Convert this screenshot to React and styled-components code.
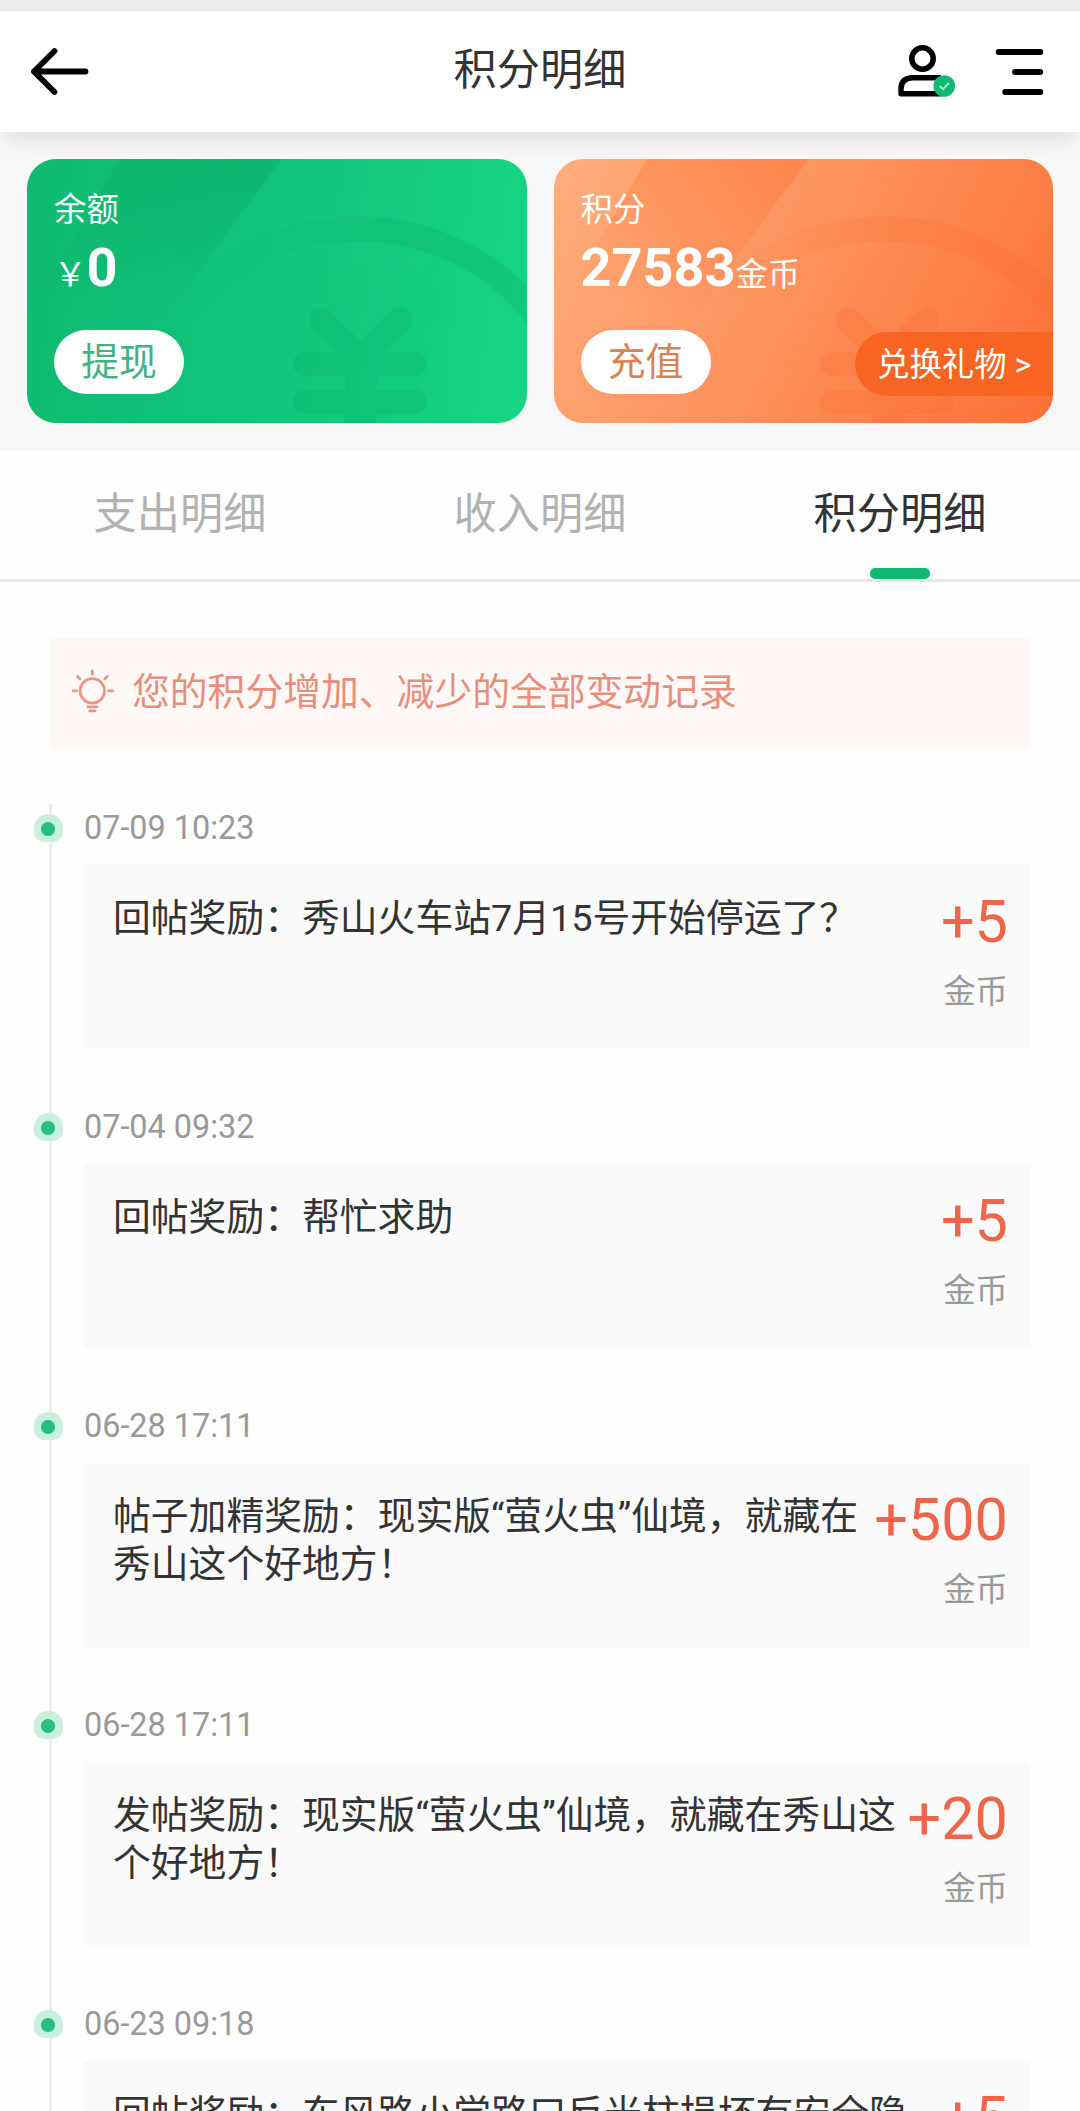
import React, { useState } from 'react';
import styled, { createGlobalStyle } from 'styled-components';


const tabs = ['支出明细', '收入明细', '积分明细'];

const records = [
  { time: '07-09 10:23', title: '回帖奖励：秀山火车站7月15号开始停运了？', amount: '+5' },
  { time: '07-04 09:32', title: '回帖奖励：帮忙求助', amount: '+5' },
  { time: '06-28 17:11', title: '帖子加精奖励：现实版“萤火虫”仙境，就藏在秀山这个好地方！', amount: '+500' },
  { time: '06-28 17:11', title: '发帖奖励：现实版“萤火虫”仙境，就藏在秀山这个好地方！', amount: '+20' },
  { time: '06-23 09:18', title: '回帖奖励：东风路小学路口反光柱损坏有安全隐患', amount: '+5' },
];

const BackIcon = () => (
  <svg width="62" height="52" viewBox="0 0 62 52" fill="none" stroke="#000" strokeWidth="5.8" strokeLinecap="round" strokeLinejoin="round">
    <path d="M27.5 5 L7 25.5 L27.5 46 M7 25.5 H58.5" />
  </svg>
);

const UserIcon = () => (
  <svg width="60" height="60" viewBox="0 0 60 60" fill="none">
    <circle cx="25.5" cy="16.5" r="10.7" stroke="#000" strokeWidth="5.6" />
    <path d="M44 35.7 H16 Q4 35.7 4 47 V51.8 H44" stroke="#000" strokeWidth="5.4" strokeLinejoin="round" />
    <circle cx="47.2" cy="44" r="10.8" fill="#11bb72" />
    <path d="M42.6 44 L46 47.2 L52 41" stroke="#b5f3d4" strokeWidth="1.8" />
  </svg>
);

const MenuIcon = () => (
  <svg width="52" height="52" viewBox="0 0 52 52" stroke="#000" strokeWidth="5.8" strokeLinecap="round">
    <path d="M4.6 6 H46.3 M21 26 H46.3 M11.2 46 H46.3" />
  </svg>
);

const BulbIcon = () => (
  <svg width="44" height="44" viewBox="0 0 44 44" fill="none" stroke="#ea9584" strokeWidth="2.8" strokeLinecap="round">
    <circle cx="21.3" cy="21.8" r="12.2" />
    <path d="M21.3 2 V5 M6.6 7.6 L9 10 M36.2 7.6 L33.8 10 M2 21.8 H5.6 M37.6 21.8 H42" />
    <path d="M16.8 37.8 H26 M18.8 41.8 H24" />
  </svg>
);

const CoinArt = ({ id, tint, opacity }) => (
  <Art viewBox="0 0 500 264" preserveAspectRatio="none">
    <defs>
      <linearGradient id={id} x1="0.75" y1="0" x2="0.4" y2="1">
        <stop offset="0" stopColor={tint} stopOpacity={opacity * 1.4} />
        <stop offset="0.6" stopColor={tint} stopOpacity="0" />
      </linearGradient>
      <linearGradient id={`${id}-ring`} x1="0" y1="0" x2="1" y2="0">
        <stop offset="0.1" stopColor={tint} stopOpacity="0" />
        <stop offset="0.7" stopColor={tint} stopOpacity={opacity} />
      </linearGradient>
    </defs>
    <path d="M93 0 H255 L60 264 H-60 Z" fill={`url(#${id})`} />
    <ellipse cx="331" cy="268" rx="216" ry="198" fill="none" stroke={`url(#${id}-ring)`} strokeWidth="25" />
    <g opacity={opacity * 0.9} fill={tint}>
      <path d="M294 161 L334 199 L373 161" fill="none" stroke={tint} strokeWidth="25" strokeLinecap="round" />
      <rect x="266" y="193" width="134" height="24" rx="12" />
      <rect x="318" y="217" width="32" height="47" />
      <rect x="266" y="231" width="134" height="24" rx="12" />
    </g>
  </Art>
);

const App = () => {
  const [active, setActive] = useState(2);

  return (
    <>
      <GlobalStyle />
      <Page>
        <StatusStrip />
        <Header>
          <HeaderSide>
            <BackIcon />
          </HeaderSide>
          <Title>积分明细</Title>
          <HeaderSide $end>
            <UserIcon />
            <MenuIcon />
          </HeaderSide>
        </Header>

        <Cards>
          <Card $bg="linear-gradient(98deg, #0fba70 0%, #11c379 45%, #16d583 100%)">
            <CoinArt id="balance" tint="#0a9a58" opacity={0.2} />
            <CardLabel>余额</CardLabel>
            <CardValue>
              <Unit>￥</Unit>0
            </CardValue>
            <CardFooter>
              <PillButton $color="#45b183">提现</PillButton>
            </CardFooter>
          </Card>
          <Card $bg="linear-gradient(118deg, #ffae7d 0%, #fd905b 50%, #fc6f35 100%)">
            <CoinArt id="points" tint="#fb6a2b" opacity={0.26} />
            <CardLabel>积分</CardLabel>
            <CardValue>
              27583<Unit>金币</Unit>
            </CardValue>
            <CardFooter>
              <PillButton $color="#dc8250">充值</PillButton>
              <GiftButton>兑换礼物 &gt;</GiftButton>
            </CardFooter>
          </Card>
        </Cards>

        <TabBar>
          {tabs.map((tab, i) => (
            <Tab key={tab} $active={i === active} onClick={() => setActive(i)}>
              {tab}
            </Tab>
          ))}
        </TabBar>

        <Notice>
          <BulbIcon />
          <NoticeText>您的积分增加、减少的全部变动记录</NoticeText>
        </Notice>

        <Timeline>
          {records.map((item, i) => (
            <Record key={i}>
              <RecordTime>{item.time}</RecordTime>
              <RecordBox>
                <RecordTitle>{item.title}</RecordTitle>
                <RecordAmount>
                  <Amount>{item.amount}</Amount>
                  <Coin>金币</Coin>
                </RecordAmount>
              </RecordBox>
            </Record>
          ))}
        </Timeline>
      </Page>
    </>
  );
};

export default App;


const GlobalStyle = createGlobalStyle`
  * {
    box-sizing: border-box;
  }

  body {
    margin: 0;
    background: #fefefe;
    font-family: Roboto, "Noto Sans CJK SC", sans-serif;
    color: #333;
    overflow: hidden;
  }

  svg {
    flex: none;
    display: block;
  }
`;

const Page = styled.div`
  width: 1080px;
  height: 2111px;
  overflow: hidden;
`;

const StatusStrip = styled.div`
  height: 11px;
  background: #ebebeb;
`;

const Header = styled.header`
  display: flex;
  align-items: center;
  justify-content: space-between;
  height: 121px;
  padding: 0 34px 0 27px;
  background: #fff;
  box-shadow: 0 14px 20px -6px rgba(0, 0, 0, 0.1);
  position: relative;
  z-index: 1;
`;

const HeaderSide = styled.div`
  display: flex;
  align-items: center;
  justify-content: ${({ $end }) => ($end ? 'flex-end' : 'flex-start')};
  gap: 37px;
  width: 240px;
`;

const Title = styled.h1`
  margin: 0 0 1px 7px;
  font-size: 43.2px;
  font-weight: 400;
  line-height: 60px;
`;

const Cards = styled.section`
  display: flex;
  gap: 27px;
  height: 318px;
  padding: 27px 27px 0;
  background: #f7f7f7;
`;

const Card = styled.div`
  flex: 1;
  display: flex;
  flex-direction: column;
  height: 264px;
  padding: 28px 0 0 27px;
  border-radius: 29px;
  background: ${({ $bg }) => $bg};
  color: #fff;
  position: relative;
  overflow: hidden;

  > div {
    position: relative;
  }
`;

const Art = styled.svg`
  position: absolute;
  inset: 0;
  width: 100%;
  height: 100%;
`;

const CardLabel = styled.div`
  font-size: 32.4px;
  line-height: 46px;
`;

const CardValue = styled.div`
  height: 97px;
  font-size: 54px;
  font-weight: 700;
  line-height: 70px;
`;

const Unit = styled.span`
  font-size: 32.4px;
  font-weight: 400;
`;

const CardFooter = styled.div`
  display: flex;
  justify-content: space-between;
`;

const PillButton = styled.button`
  width: 130px;
  height: 64px;
  padding: 0 0 8px;
  border: none;
  border-radius: 32px;
  background: #fff;
  color: ${({ $color }) => $color};
  font-family: inherit;
  font-size: 37.8px;
`;

const GiftButton = styled.button`
  width: 198px;
  height: 64px;
  margin-top: 2px;
  padding: 0 0 6px 22px;
  border: none;
  border-radius: 32px 0 0 32px;
  background: #f86522;
  color: #fff;
  font-family: inherit;
  font-size: 32.4px;
  text-align: left;
  white-space: nowrap;
`;

const TabBar = styled.nav`
  display: flex;
  height: 132px;
  border-bottom: 3px solid #e6e6e6;
`;

const Tab = styled.div`
  flex: 1;
  display: flex;
  flex-direction: column;
  align-items: center;
  justify-content: space-between;
  padding-top: 35px;
  font-size: 43.2px;
  line-height: 60px;
  color: ${({ $active }) => ($active ? '#333' : '#b2b2b2')};

  &::after {
    content: '';
    width: 60px;
    height: 11px;
    border-radius: 5px;
    background: ${({ $active }) => ($active ? '#12b872' : 'transparent')};
  }
`;

const Notice = styled.div`
  display: flex;
  align-items: center;
  gap: 17px;
  height: 112px;
  margin: 55px 50px 0;
  padding: 0 0 5px 21px;
  border-radius: 6px;
  background: #fff8f7;
  color: #e78f7c;
  font-size: 37.8px;
`;

const NoticeText = styled.span`
  padding-bottom: 4px;
`;

const Timeline = styled.div`
  margin: 55px 50px 0 49px;
  border-left: 3px solid #ededed;
`;

const Record = styled.div`
  height: 299px;
  padding-left: 32px;
`;

const RecordTime = styled.div`
  height: 61px;
  font-size: 32.4px;
  line-height: 48px;
  color: #999;
  position: relative;

  /* marker sits on the line */
  &::before {
    content: '';
    position: absolute;
    left: -50px;
    top: 10px;
    width: 29px;
    height: 28px;
    border-radius: 14px 14px 10px 10px;
    background: radial-gradient(circle at 14px 15px, #26bf80 6.5px, #c9f0df 7.5px);
  }
`;

const RecordBox = styled.div`
  display: flex;
  justify-content: space-between;
  height: 184px;
  padding: 29px 22px 0 29px;
  background: #fafafa;
`;

const RecordTitle = styled.div`
  flex: 1;
  font-size: 37.8px;
  line-height: 48px;
`;

const RecordAmount = styled.div`
  margin-left: 10px;
  text-align: right;
`;

const Amount = styled.div`
  font-size: 59.4px;
  line-height: 57px;
  color: #ee6549;
`;

const Coin = styled.div`
  margin-top: 18px;
  font-size: 32.4px;
  line-height: 46px;
  color: #999;
`;
